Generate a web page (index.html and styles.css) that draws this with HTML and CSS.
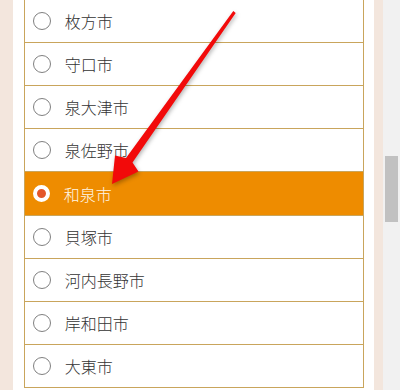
FILE: index.html
```html
<!DOCTYPE html>
<html lang="ja">
<head>
<meta charset="utf-8">
<title>市町村選択</title>
<link rel="stylesheet" href="styles.css">
</head>
<body>
<div class="page">
  <div class="side side-left"></div>
  <div class="panel">
    <ul class="list">
      <li class="row"><span class="radio"></span><span class="label">枚方市</span></li>
      <li class="row"><span class="radio"></span><span class="label">守口市</span></li>
      <li class="row"><span class="radio"></span><span class="label">泉大津市</span></li>
      <li class="row"><span class="radio"></span><span class="label">泉佐野市</span></li>
      <li class="row selected"><span class="radio"></span><span class="label">和泉市</span></li>
      <li class="row"><span class="radio"></span><span class="label">貝塚市</span></li>
      <li class="row"><span class="radio"></span><span class="label">河内長野市</span></li>
      <li class="row"><span class="radio"></span><span class="label">岸和田市</span></li>
      <li class="row"><span class="radio"></span><span class="label">大東市</span></li>
    </ul>
  </div>
  <div class="side side-right"></div>
  <div class="scrollbar"><div class="thumb"></div></div>
</div>
<svg class="arrow" width="400" height="390" viewBox="0 0 400 390">
  <polygon points="233.3,11.1 235.7,12.9 132.5,162.5 138.5,171.5 112,184 115,155.5 126,157.9" fill="#f20a0a"/>
</svg>
</body>
</html>
```

FILE: styles.css
```css
html, body {
  margin: 0;
  padding: 0;
  width: 400px;
  height: 390px;
  overflow: hidden;
  background: #ffffff;
  font-family: "Noto Sans CJK JP", "Noto Sans", sans-serif;
}

.page {
  display: flex;
  height: 390px;
}

.side {
  background: #f3e6dd;
}

.side-left {
  width: 13px;
}

.side-right {
  width: 10px;
}

.panel {
  width: 350px;
  padding: 0 10px 0 11px;
  background: #ffffff;
}

.list {
  list-style: none;
  margin: 0;
  padding: 0;
  border-left: 1px solid #c9a55c;
  border-right: 1px solid #c9a55c;
}

.row {
  display: flex;
  align-items: center;
  height: 42px;
  border-bottom: 1px solid #c9a55c;
  padding-left: 8px;
  color: #333333;
  font-size: 16px;
  font-weight: 300;
}

.row.selected {
  height: 44px;
  background: #ee8c00;
  color: #fff6e6;
  box-sizing: border-box;
}

.radio {
  width: 16px;
  height: 16px;
  border: 1px solid #808080;
  border-radius: 50%;
  background: #ffffff;
  flex: none;
}

.row.selected .radio {
  width: 9px;
  height: 9px;
  border: 4px solid #ffffff;
  background: #e4572b;
}

.label {
  margin-left: 14px;
  line-height: 1;
}

.scrollbar {
  width: 17px;
  background: #f1f1f1;
  position: relative;
}

.thumb {
  position: absolute;
  left: 2px;
  top: 156px;
  width: 13px;
  height: 66px;
  background: #c1c1c1;
}

.arrow {
  position: absolute;
  left: 0;
  top: 0;
  pointer-events: none;
  filter: drop-shadow(1px 2px 2px rgba(0, 0, 0, 0.3));
}
```
